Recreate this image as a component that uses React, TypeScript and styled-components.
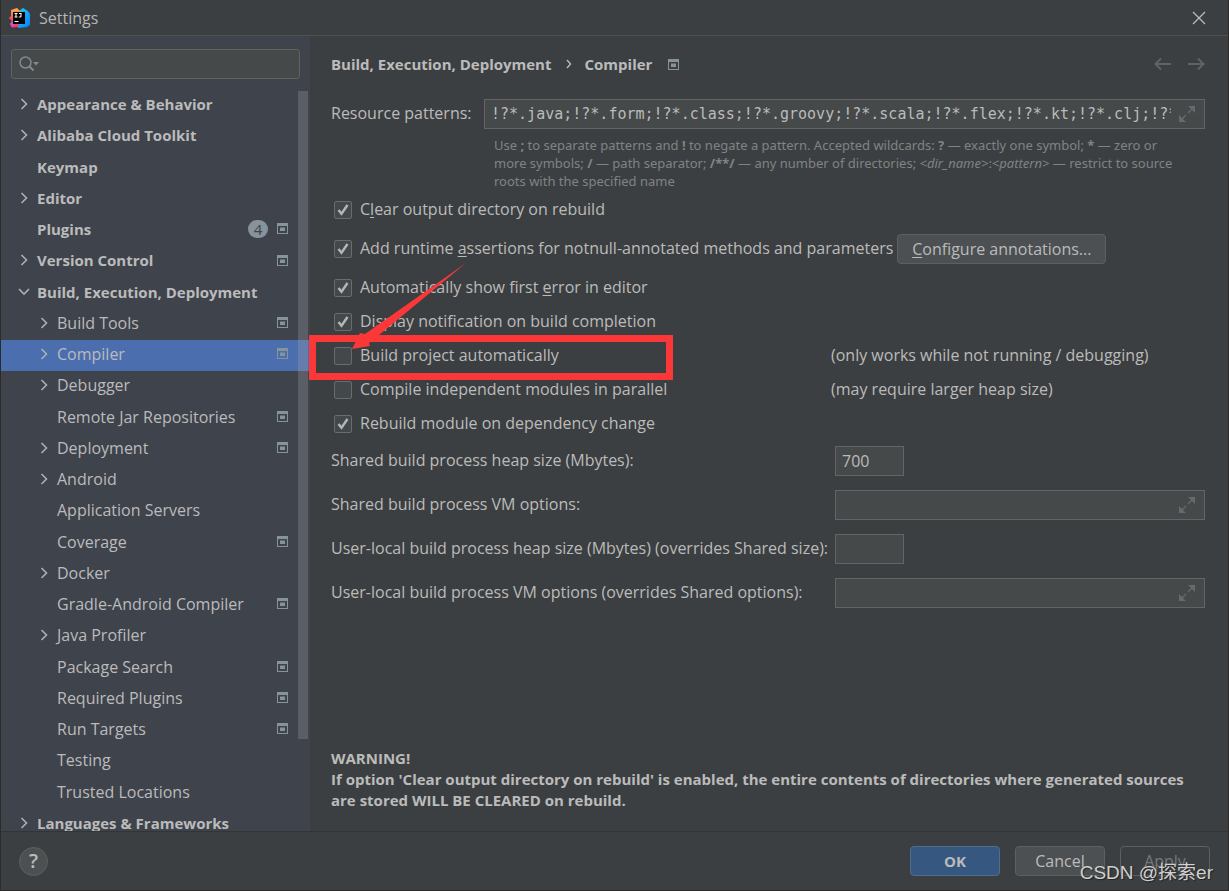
import React from "react";
import styled, { createGlobalStyle, css } from "styled-components";

const SANS = `"Open Sans", "Noto Sans", "Noto Sans CJK SC", sans-serif`;
const HINT_SANS = `"Noto Sans", "Open Sans", sans-serif`;
const MONO = `"DejaVu Sans Mono", "Liberation Mono", monospace`;

const Global = createGlobalStyle`
  *, *::before, *::after { box-sizing: border-box; }
  body { margin: 0; background: #3c3f41; color: #bbbbbb; font: 16px/20px ${SANS}; }
  button, input { font: inherit; color: inherit; }
  button { cursor: pointer; }
`;

const Window = styled.div`
  position: relative;
  display: flex;
  flex-direction: column;
  height: 100vh;
  border: solid #2b2b2b;
  border-width: 0 1px 1px;
  overflow: hidden;
`;

const TitleBar = styled.header`
  display: flex;
  align-items: center;
  gap: 9px;
  flex: none;
  height: 36px;
  padding: 0 22px 0 8px;
  border-bottom: 1px solid #515151;
`;

const Title = styled.span`
  flex: 1;
  color: #b4b6b7;
`;

const IconButton = styled.button`
  display: flex;
  flex: none;
  padding: 0;
  border: 0;
  background: none;
`;

const Body = styled.div`
  display: flex;
  flex: 1;
  min-height: 0;
`;

const Sidebar = styled.aside`
  position: relative;
  display: flex;
  flex-direction: column;
  flex: none;
  width: 309px;
  padding-top: 13px;
  background: #3f434c;
`;

const SearchBox = styled.div`
  display: flex;
  align-items: center;
  flex: none;
  gap: 4px;
  height: 30px;
  margin: 0 10px 11px;
  padding-left: 7px;
  border: 1px solid #5f6365;
  border-radius: 3px;
  background: #45494a;
`;

const BareInput = styled.input`
  flex: 1;
  min-width: 0;
  height: 100%;
  padding: 0;
  border: 0;
  outline: 0;
  background: none;
`;

const Tree = styled.ul`
  flex: 1;
  min-height: 0;
  margin: 0;
  padding: 0;
  overflow: hidden;
  list-style: none;
`;

const TreeRow = styled.li<{ $level: number; $selected?: boolean }>`
  display: flex;
  align-items: center;
  height: 31px;
  padding: 0 21px 4px ${(p) => (p.$level ? 36 : 16)}px;
  font-size: ${(p) => (p.$level ? 16 : 15)}px;
  font-weight: ${(p) => (p.$level ? 400 : 700)};
  ${(p) => p.$selected && css`background: #4b6eaf;`}
  &:nth-child(4n + 2) { height: 32px; }
`;

const Twisty = styled.span`
  display: flex;
  width: 20px;
`;

const TreeLabel = styled.span`
  flex: 1;
  white-space: nowrap;
`;

const Count = styled.span`
  width: 20px;
  margin-right: 9px;
  border-radius: 10px;
  background: #87939a;
  color: #3f434c;
  font-size: 15px;
  font-weight: 400;
  line-height: 18px;
  text-align: center;
`;

const ScrollThumb = styled.div`
  position: absolute;
  top: 55px;
  right: 2px;
  bottom: 92px;
  width: 10px;
  background: rgba(166, 166, 166, 0.28);
`;

const Main = styled.main`
  display: flex;
  flex-direction: column;
  flex: 1;
  min-width: 0;
  padding: 18px 23px 20px 21px;
`;

const Crumbs = styled.nav`
  display: flex;
  align-items: center;
  height: 20px;
  margin-bottom: 25px;
  font-size: 15px;
  font-weight: 700;
`;

const CrumbSeparator = styled.span`
  display: flex;
  margin: 0 12px 0 13px;
`;

const CrumbScope = styled.span`
  display: flex;
  flex: 1;
  margin-left: 16px;
`;

const NavButtons = styled.span`
  display: flex;
  gap: 17px;
`;

const PatternRow = styled.div`
  display: grid;
  grid-template-columns: 153px 1fr;
  align-items: center;
`;

const FieldLabel = styled.label`
  padding-bottom: 2px;
`;

const Hint = styled.p`
  grid-column: 2;
  margin: 7px 0 8px;
  padding: 0 18px 0 10px;
  color: #808385;
  font-family: ${HINT_SANS};
  font-size: 13px;
  line-height: 18px;
`;

const Field = styled.div<{ $short?: boolean }>`
  display: flex;
  align-items: center;
  width: ${(p) => (p.$short ? "69px" : "auto")};
  height: 30px;
  padding: 0 9px 0 6px;
  border: 1px solid #646464;
  background: #45494a;
`;

const FieldInput = styled(BareInput)<{ $mono?: boolean }>`
  margin-right: 8px;
  ${(p) => p.$mono && css`font: 15px ${MONO};`}
`;

const Options = styled.div<{ $gap: number }>`
  display: flex;
  flex-direction: column;
  gap: ${(p) => p.$gap}px;
  margin-bottom: 10px;
`;

const OptionRow = styled.div<{ $tall?: boolean }>`
  position: relative;
  display: flex;
  align-items: center;
  gap: 4px;
  height: ${(p) => (p.$tall ? 30 : 24)}px;
  white-space: nowrap;
`;

const OptionLabel = styled.label<{ $fixed?: boolean }>`
  display: flex;
  align-items: center;
  gap: 8px;
  padding-left: 3px;
  ${(p) => p.$fixed && css`width: 496px;`}
  u { text-underline-offset: 2px; }
`;

const OptionText = styled.span`
  padding-bottom: 2px;
`;

const CheckFrame = styled.span`
  position: relative;
  display: flex;
  width: 18px;
  height: 18px;
  svg { position: absolute; top: 0; left: 0; pointer-events: none; display: none; }
  input:checked + svg { display: block; }
`;

const CheckInput = styled.input`
  appearance: none;
  width: 18px;
  height: 18px;
  margin: 0;
  border: 1px solid #6b6b6b;
  border-radius: 2px;
  background: #43494a;
`;

const FieldGrid = styled.div`
  display: grid;
  grid-template-columns: 504px 1fr;
  align-items: center;
  row-gap: 14px;
  white-space: nowrap;
`;

const Warning = styled.p`
  margin: auto 0 0;
  font-size: 15px;
  font-weight: 700;
  line-height: 21px;
`;

const PushButton = styled.button<{ $kind?: "primary" | "disabled"; $wide?: boolean }>`
  width: ${(p) => (p.$wide ? 209 : 90)}px;
  height: 30px;
  padding: 0;
  border: 1px solid #5e6060;
  border-radius: 4px;
  background: #4c5052;
  text-align: center;
  u { text-underline-offset: 2px; }
  ${(p) =>
    p.$kind === "primary" &&
    css`
      border-color: #4c708c;
      background: #365880;
      font-size: 15px;
      font-weight: 700;
    `}
  ${(p) =>
    p.$kind === "disabled" &&
    css`
      background: none;
      color: #777777;
    `}
`;

const Footer = styled.footer`
  display: flex;
  align-items: center;
  gap: 15px;
  flex: none;
  height: 59px;
  padding: 0 18px;
  border-top: 1px solid #323435;
`;

const HelpButton = styled.button`
  width: 29px;
  height: 29px;
  margin-right: auto;
  padding: 0;
  border: 1px solid #5e6060;
  border-radius: 50%;
  background: #4c5052;
  font-size: 20px;
  font-weight: 600;
  line-height: 26px;
`;

const Highlight = styled.div`
  position: absolute;
  top: -9px;
  left: -22px;
  width: 364px;
  height: 45px;
  border: 7px solid #fc3737;
  pointer-events: none;
`;

const Pointer = styled.svg`
  position: absolute;
  top: -83px;
  left: 19px;
  pointer-events: none;
`;

const Watermark = styled.div`
  position: absolute;
  right: 15px;
  bottom: 4px;
  color: #d0d0d0;
  font: 19px/26px "Liberation Sans", "Noto Sans CJK SC", sans-serif;
  text-shadow: 1px 1px 1px #222222;
  pointer-events: none;
`;

const ScopeIcon = () => (
  <svg width="12" height="11" viewBox="0 0 12 11" fill="#87939a" aria-hidden="true">
    <path fillRule="evenodd" d="M0 0h11v11H0zM1 3h9v7H1z" />
    <path d="M3 4.500h5v3.500H3z" />
  </svg>
);

const Chevron = ({ open }: { open?: boolean }) => (
  <svg width="14" height="12" viewBox="0 0 14 12" fill="none" stroke="#adb0b2" strokeWidth="1.6" aria-hidden="true">
    <path d={open ? "M2 3l5 5 5-5" : "M4.500 1l5 5-5 5"} />
  </svg>
);

const ExpandIcon = () => (
  <svg width="16" height="16" viewBox="0 0 16 16" aria-hidden="true">
    <path fill="#626b70" d="M9 0h7v7zM0 9v7h7z" />
    <path stroke="#626b70" strokeWidth="1.4" d="M9 7l4.5-4.5M7 9l-4.500 4.500" />
  </svg>
);

const Arrow = ({ right }: { right?: boolean }) => (
  <svg width="17" height="14" viewBox="0 0 17 14" fill="none" stroke="#606365" strokeWidth="2" aria-hidden="true">
    <path d={right ? "M0 7h15.500M10 1.500L15.500 7 10 12.500" : "M17 7H1.500M7 1.500L1.500 7 7 12.500"} />
  </svg>
);

const AppLogo = () => (
  <svg width="21" height="20" viewBox="0 0 21 20" aria-hidden="true">
    <defs>
      <linearGradient id="warm" x1="0" y1="0" x2="0" y2="1">
        <stop offset="0" stopColor="#fdb44b" />
        <stop offset="0.5" stopColor="#fc5a4a" />
        <stop offset="1" stopColor="#fe2d78" />
      </linearGradient>
      <linearGradient id="cool" x1="0" y1="0" x2="1" y2="1">
        <stop offset="0" stopColor="#21d1f5" />
        <stop offset="1" stopColor="#087cfa" />
      </linearGradient>
    </defs>
    <path fill="url(#cool)" d="M10 3l4-3 5 3 2 3v11l-3 2-9 1-1-6z" />
    <path fill="url(#warm)" d="M2 2l6-2 4 4-2 11-1 4-6 .5L1 16l2-3-3-3 2-2z" />
    <path fill="#c757bc" d="M3 9l3 8-3 2.500L1 16l2-3z" />
    <path fill="#000" d="M4 4h12v12H4z" />
    <path stroke="#fff" strokeWidth="1.100" fill="none" d="M5.500 5.500h3M7 5.500v3.500M5.500 9h3M10 5.500h2v2.700q0 .8-.9.8h-1.300M5.500 13.500h4" />
  </svg>
);

type Node = { label: string; level?: number; twisty?: "open" | "closed"; scope?: boolean; count?: number; selected?: boolean };

const nodes: Node[] = [
  { label: "Appearance & Behavior", twisty: "closed" },
  { label: "Alibaba Cloud Toolkit", twisty: "closed" },
  { label: "Keymap" },
  { label: "Editor", twisty: "closed" },
  { label: "Plugins", scope: true, count: 4 },
  { label: "Version Control", twisty: "closed", scope: true },
  { label: "Build, Execution, Deployment", twisty: "open" },
  { label: "Build Tools", level: 1, twisty: "closed", scope: true },
  { label: "Compiler", level: 1, twisty: "closed", scope: true, selected: true },
  { label: "Debugger", level: 1, twisty: "closed" },
  { label: "Remote Jar Repositories", level: 1, scope: true },
  { label: "Deployment", level: 1, twisty: "closed", scope: true },
  { label: "Android", level: 1, twisty: "closed" },
  { label: "Application Servers", level: 1 },
  { label: "Coverage", level: 1, scope: true },
  { label: "Docker", level: 1, twisty: "closed" },
  { label: "Gradle-Android Compiler", level: 1, scope: true },
  { label: "Java Profiler", level: 1, twisty: "closed" },
  { label: "Package Search", level: 1, scope: true },
  { label: "Required Plugins", level: 1, scope: true },
  { label: "Run Targets", level: 1, scope: true },
  { label: "Testing", level: 1 },
  { label: "Trusted Locations", level: 1 },
  { label: "Languages & Frameworks", twisty: "closed" },
];

const Option = ({ checked, fixed, children }: { checked?: boolean; fixed?: boolean; children: React.ReactNode }) => (
  <OptionLabel $fixed={fixed}>
    <CheckFrame>
      <CheckInput type="checkbox" defaultChecked={checked} />
      <svg width="18" height="18" viewBox="0 0 18 18" fill="none" stroke="#b4b6b7" strokeWidth="2.400" aria-hidden="true">
        <path d="M4.500 9l3 3.800L13.500 4" />
      </svg>
    </CheckFrame>
    <OptionText>{children}</OptionText>
  </OptionLabel>
);

const TextField = ({ id, value, short, mono }: { id: string; value?: string; short?: boolean; mono?: boolean }) => (
  <Field $short={short}>
    <FieldInput id={id} type="text" defaultValue={value} $mono={mono} />
    {!short && (
      <IconButton type="button" aria-label="Expand">
        <ExpandIcon />
      </IconButton>
    )}
  </Field>
);

export default function App() {
  return (
    <>
      <Global />
      <Window>
        <TitleBar>
          <AppLogo />
          <Title>Settings</Title>
          <IconButton type="button" aria-label="Close">
            <svg width="14" height="14" viewBox="0 0 14 14" stroke="#bbbbbb" strokeWidth="1.300">
              <path d="M1 1l12 12M13 1L1 13" />
            </svg>
          </IconButton>
        </TitleBar>
        <Body>
          <Sidebar>
            <SearchBox>
              <svg width="21" height="16" viewBox="0 0 21 16" fill="none" stroke="#7f8b91" strokeWidth="1.500" aria-hidden="true">
                <circle cx="6.500" cy="6.500" r="5.500" />
                <path d="M10.500 10.500l4 4" strokeWidth="2" />
                <path d="M14 6h6l-3 3.500z" fill="#7f8b91" stroke="none" />
              </svg>
              <BareInput type="text" aria-label="Search settings" />
            </SearchBox>
            <Tree>
              {nodes.map((n) => (
                <TreeRow key={n.label} $level={n.level ?? 0} $selected={n.selected}>
                  <Twisty>{n.twisty && <Chevron open={n.twisty === "open"} />}</Twisty>
                  <TreeLabel>{n.label}</TreeLabel>
                  {n.count && <Count>{n.count}</Count>}
                  {n.scope && <ScopeIcon />}
                </TreeRow>
              ))}
            </Tree>
            <ScrollThumb />
          </Sidebar>
          <Main>
            <Crumbs>
              <span>Build, Execution, Deployment</span>
              <CrumbSeparator>
                <svg width="8" height="10" viewBox="0 0 8 10" fill="none" stroke="#bbbbbb" strokeWidth="1.400">
                  <path d="M2 1l3.500 4L2 9" />
                </svg>
              </CrumbSeparator>
              <span>Compiler</span>
              <CrumbScope>
                <ScopeIcon />
              </CrumbScope>
              <NavButtons>
                <IconButton type="button" aria-label="Back"><Arrow /></IconButton>
                <IconButton type="button" aria-label="Forward"><Arrow right /></IconButton>
              </NavButtons>
            </Crumbs>
            <PatternRow>
              <FieldLabel htmlFor="patterns">Resource patterns:</FieldLabel>
              <TextField
                id="patterns"
                mono
                value="!?*.java;!?*.form;!?*.class;!?*.groovy;!?*.scala;!?*.flex;!?*.kt;!?*.clj;!?*.aj"
              />
              <Hint>
                Use <b>;</b> to separate patterns and <b>!</b> to negate a pattern. Accepted wildcards: <b>?</b> — exactly one
                symbol; <b>*</b> — zero or more symbols; <b>/</b> — path separator; <b>/**/</b> — any number of directories;{" "}
                <i>&lt;dir_name&gt;</i>:<i>&lt;pattern&gt;</i> — restrict to source roots with the specified name
              </Hint>
            </PatternRow>
            <Options $gap={12}>
              <OptionRow>
                <Option checked>C<u>l</u>ear output directory on rebuild</Option>
              </OptionRow>
              <OptionRow $tall>
                <Option checked>Add runtime <u>a</u>ssertions for notnull-annotated methods and parameters</Option>
                <PushButton type="button" $wide><u>C</u>onfigure annotations...</PushButton>
              </OptionRow>
              <OptionRow>
                <Option checked>Automatically show first <u>e</u>rror in editor</Option>
              </OptionRow>
            </Options>
            <Options $gap={10}>
              <OptionRow>
                <Option checked>Display notification on build completion</Option>
              </OptionRow>
              <OptionRow>
                <Option fixed>Build project automatically</Option>
                <OptionText>(only works while not running / debugging)</OptionText>
                <Highlight />
                <Pointer width="120" height="92" viewBox="0 0 120 92" aria-hidden="true">
                  <path fill="#fc3737" d="M116 2L15 73l-5-1L2 88l18-3-1-3 4-3z" />
                </Pointer>
              </OptionRow>
              <OptionRow>
                <Option fixed>Compile independent modules in parallel</Option>
                <OptionText>(may require larger heap size)</OptionText>
              </OptionRow>
              <OptionRow>
                <Option checked>Rebuild module on dependency change</Option>
              </OptionRow>
            </Options>
            <FieldGrid>
              <FieldLabel htmlFor="shared-heap">Shared build process heap size (Mbytes):</FieldLabel>
              <TextField id="shared-heap" short value="700" />
              <FieldLabel htmlFor="shared-vm">Shared build process VM options:</FieldLabel>
              <TextField id="shared-vm" />
              <FieldLabel htmlFor="local-heap">User-local build process heap size (Mbytes) (overrides Shared size):</FieldLabel>
              <TextField id="local-heap" short />
              <FieldLabel htmlFor="local-vm">User-local build process VM options (overrides Shared options):</FieldLabel>
              <TextField id="local-vm" />
            </FieldGrid>
            <Warning>
              WARNING!
              <br />
              If option 'Clear output directory on rebuild' is enabled, the entire contents of directories where generated
              sources are stored WILL BE CLEARED on rebuild.
            </Warning>
          </Main>
        </Body>
        <Footer>
          <HelpButton type="button" aria-label="Help">?</HelpButton>
          <PushButton type="button" $kind="primary">OK</PushButton>
          <PushButton type="button">Cancel</PushButton>
          <PushButton type="button" $kind="disabled">Apply</PushButton>
        </Footer>
        <Watermark>CSDN @探索er</Watermark>
      </Window>
    </>
  );
}
